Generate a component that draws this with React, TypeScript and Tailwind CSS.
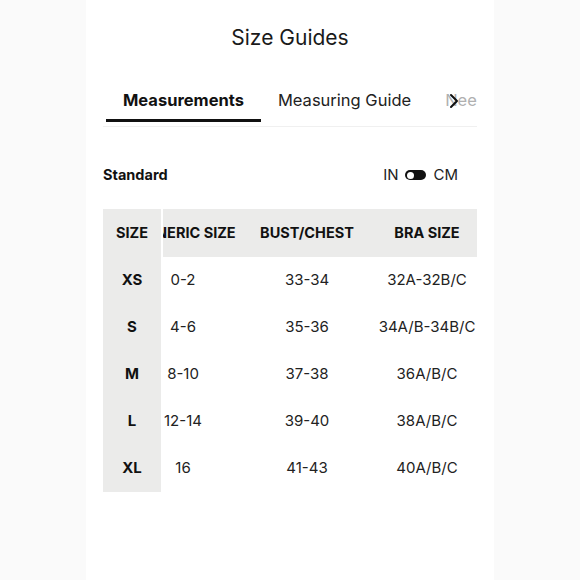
import { ChevronRight } from 'lucide-react'

const ROWS = [
  { size: 'XS', generic: '0-2', bust: '33-34', bra: '32A-32B/C' },
  { size: 'S', generic: '4-6', bust: '35-36', bra: '34A/B-34B/C' },
  { size: 'M', generic: '8-10', bust: '37-38', bra: '36A/B/C' },
  { size: 'L', generic: '12-14', bust: '39-40', bra: '38A/B/C' },
  { size: 'XL', generic: '16', bust: '41-43', bra: '40A/B/C' },
]

export default function App() {
  return (
    <div className="w-[580px] h-[580px] bg-[#fafafa] flex justify-center overflow-hidden" style={{ fontFamily: 'Inter, "Liberation Sans", sans-serif' }}>
      <div className="w-[408px] h-full bg-white px-[17px] pt-[24px] text-[#111]">

        {/* TITLE */}
        <h1 className="text-center text-[21px] leading-[28px] text-[#1a1a1a]">Size Guides</h1>

        {/* TABS */}
        <div className="relative mt-[36px] pb-[4px] border-b border-[#f0f0f0] overflow-hidden">
          <div className="flex pl-[3px] whitespace-nowrap">
            <div className="px-[17px] pb-[7px] border-b-[3px] border-[#111] text-[16.5px] leading-[24px] font-bold">Measurements</div>
            <div className="px-[17px] pb-[7px] text-[16.5px] leading-[24px] text-[#222]">Measuring Guide</div>
            <div className="px-[17px] pb-[7px] text-[16.5px] leading-[24px] text-[#b0b0b0]">Need Help?</div>
          </div>
          <div className="absolute right-[11px] top-[1px] text-[#111]">
            <ChevronRight size={24} strokeWidth={2} />
          </div>
        </div>

        {/* UNITS */}
        <div className="flex items-center justify-between mt-[38px] pr-[19px]">
          <span className="text-[14.5px] leading-[20px] font-bold">Standard</span>
          <div className="flex items-center gap-[7px] text-[15px] leading-[20px] text-[#222]">
            <span>IN</span>
            <span className="w-[21px] h-[10px] rounded-full bg-[#111] flex items-center pl-[2px]">
              <span className="w-[7px] h-[7px] rounded-full bg-white" />
            </span>
            <span>CM</span>
          </div>
        </div>

        {/* TABLE */}
        <div className="flex mt-[24px]">
          <div className="w-[58px] bg-[#ebebea] flex flex-col">
            <div className="h-[48px] flex items-center justify-center text-[14.5px] font-bold">SIZE</div>
            {ROWS.map(r => (
              <div key={r.size} className="h-[47px] flex items-center justify-center text-[15px] font-bold">{r.size}</div>
            ))}
          </div>
          <div className="w-[2px]" />
          <div className="w-[314px] overflow-hidden">
            <div className="ml-[-34px] w-[348px]">
              <div className="h-[48px] bg-[#ebebea] flex items-center text-[14.5px] font-bold whitespace-nowrap">
                <div className="w-[108px] pl-[6px] text-center">GENERIC SIZE</div>
                <div className="w-[140px] text-center">BUST/CHEST</div>
                <div className="w-[100px] text-center">BRA SIZE</div>
              </div>
              {ROWS.map(r => (
                <div key={r.size} className="h-[47px] flex items-center text-[15px] text-[#222] whitespace-nowrap">
                  <div className="w-[108px] text-center">{r.generic}</div>
                  <div className="w-[140px] text-center">{r.bust}</div>
                  <div className="w-[100px] text-center">{r.bra}</div>
                </div>
              ))}
            </div>
          </div>
        </div>

      </div>
    </div>
  )
}
